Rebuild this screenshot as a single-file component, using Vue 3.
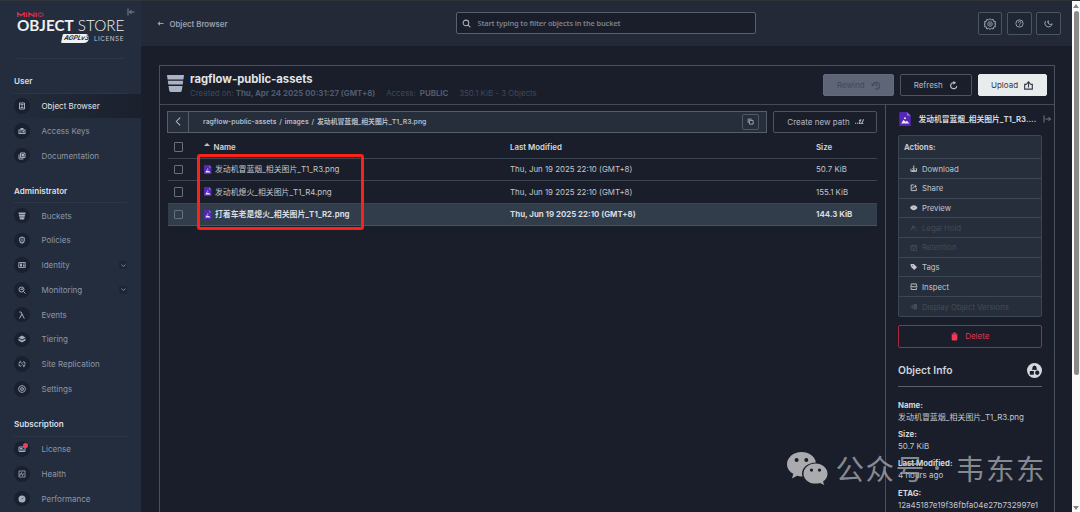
<template>
    <div class="app">
        <aside class="sidebar">
            <div class="brand">
                <svg class="collapse" viewBox="0 0 16 16" v-html="icons.collapse"></svg>
                <svg class="minio" viewBox="0 0 27 5">
                    <path d="M.7 5V.8L4 3.6 7.300.8V5M9.500.5V5M12 5V.9l5 3.500V.5M19.300.5V5" fill="none" stroke="#d7324c" stroke-width="1.300" />
                    <rect x="21.200" y="1" width="5" height="3.300" rx="1.600" fill="none" stroke="#d7324c" stroke-width="1" />
                </svg>
                <div class="product"><b>OBJECT</b> <span>STORE</span></div>
                <div class="license">
                    <span class="agpl">AGPL<i>v3</i></span>
                    <span class="license-text">LICENSE</span>
                </div>
            </div>

            <nav v-for="section in menu" :key="section.title" class="section">
                <h2 class="section-title">{{ section.title }}</h2>
                <ul class="menu">
                    <li v-for="item in section.items" :key="item.label" class="menu-item" :class="{ active: item.active }">
                        <span class="menu-icon">
                            <svg viewBox="0 0 16 16" v-html="icons[item.icon]"></svg>
                            <span v-if="item.badge" class="dot"></span>
                        </span>
                        <span class="menu-label">{{ item.label }}</span>
                        <span v-if="item.expandable" class="chevron">
                            <svg viewBox="0 0 16 16" v-html="icons.down"></svg>
                        </span>
                    </li>
                </ul>
            </nav>
        </aside>

        <main class="main">
            <header class="topbar">
                <div class="back">
                    <svg viewBox="0 0 16 16" v-html="icons.back"></svg>
                    <span>Object Browser</span>
                </div>
                <div class="search">
                    <svg viewBox="0 0 16 16" v-html="icons.search"></svg>
                    <span>Start typing to filter objects in the bucket</span>
                </div>
                <div class="tools">
                    <button v-for="tool in ['gear', 'help', 'moon']" :key="tool" class="tool">
                        <svg viewBox="0 0 16 16" :class="tool" v-html="icons[tool]"></svg>
                    </button>
                </div>
            </header>

            <section class="browser">
                <div class="bucket-head">
                    <svg class="bucket-icon" viewBox="0 0 17 17">
                        <path d="M.5 0h16a.5.5 0 0 1 .5.6L16.400 4.500H.6L0 .6A.5.5 0 0 1 .5 0zM.8 5.700h15.400L15.700 9.600H1.300zM1.500 10.900h14l-.7 4.700A1.500 1.500 0 0 1 13.300 17H3.700a1.500 1.500 0 0 1-1.500-1.400z" fill="#aab2c6" />
                    </svg>
                    <div class="bucket-info">
                        <h1>ragflow-public-assets</h1>
                        <p>
                            <span>Created on: <b>Thu, Apr 24 2025 00:31:27 (GMT+8)</b></span>
                            <span>Access: <b>&nbsp;PUBLIC</b></span>
                            <span>350.1 KiB - 3 Objects</span>
                        </p>
                    </div>
                    <div class="bucket-actions">
                        <button class="btn disabled">Rewind <svg viewBox="0 0 16 16" v-html="icons.rewind"></svg></button>
                        <button class="btn">Refresh <svg viewBox="0 0 16 16" v-html="icons.refresh"></svg></button>
                        <button class="btn primary">Upload <svg viewBox="0 0 16 16" v-html="icons.upload"></svg></button>
                    </div>
                </div>

                <div class="bucket-body">
                    <div class="listing">
                        <div class="path-row">
                            <div class="path">
                                <span class="path-back"><svg viewBox="0 0 16 16" v-html="icons.left"></svg></span>
                                <span class="crumbs">ragflow-public-assets&nbsp; /&nbsp; images&nbsp; /&nbsp; 发动机冒蓝烟_相关图片_T1_R3.png</span>
                                <span class="copy"><svg viewBox="0 0 16 16" v-html="icons.copy"></svg></span>
                            </div>
                            <button class="btn new-path">Create new path <svg viewBox="0 0 16 16" v-html="icons.path"></svg></button>
                        </div>

                        <div class="table">
                            <div class="row head">
                                <span class="check"></span>
                                <span class="name"><i class="sort"></i>Name</span>
                                <span>Last Modified</span>
                                <span>Size</span>
                            </div>
                            <div v-for="file in files" :key="file.name" class="row" :class="{ selected: file.selected }">
                                <span class="check"></span>
                                <span class="name">
                                    <svg class="file-icon" viewBox="0 0 12 15" v-html="icons.image"></svg>{{ file.name }}
                                </span>
                                <span>{{ file.modified }}</span>
                                <span>{{ file.size }}</span>
                            </div>
                            <div class="highlight"></div>
                        </div>
                    </div>

                    <aside class="details">
                        <div class="details-head">
                            <svg class="file-icon" viewBox="0 0 12 15" v-html="icons.image"></svg>
                            <b>发动机冒蓝烟_相关图片_T1_R3....</b>
                            <svg class="close" viewBox="0 0 16 16" v-html="icons.expand"></svg>
                        </div>
                        <ul class="actions">
                            <li class="actions-title">Actions:</li>
                            <li v-for="action in actions" :key="action.label" :class="{ off: action.off }">
                                <svg viewBox="0 0 16 16" v-html="icons[action.icon]"></svg>
                                {{ action.label }}
                            </li>
                        </ul>
                        <button class="btn delete"><svg viewBox="0 0 16 16" v-html="icons.trash"></svg> Delete</button>
                        <div class="info-head">
                            <h3>Object Info</h3>
                            <svg viewBox="0 0 16 16" v-html="icons.objectInfo"></svg>
                        </div>
                        <dl class="info">
                            <template v-for="row in info" :key="row.label">
                                <dt>{{ row.label }}:</dt>
                                <dd>{{ row.value }}</dd>
                            </template>
                        </dl>
                    </aside>
                </div>
            </section>
        </main>

        <div class="scrollbar">
            <i class="arrow up"></i>
            <div class="thumb"></div>
            <i class="arrow"></i>
        </div>

        <div class="watermark">
            <svg viewBox="0 0 41 33">
                <path fill-rule="evenodd" d="M14.500 0C22 0 28 4.600 28.900 10.400 21 10.400 15 15.500 15 21.500c0 1.100.2 2 .5 2.900-2 .1-3.700-.1-5.400-.6L5 26.400l1.300-4.600C2.500 19.700 0 16.200 0 12.200 0 5.500 6.500 0 14.500 0zM9.600 6a2 2 0 1 0 0 4 2 2 0 0 0 0-4zm9.700 0a2 2 0 1 0 0 4 2 2 0 0 0 0-4z" />
                <path fill-rule="evenodd" d="M28.500 11.500c6.700 0 12 4.500 12 10.200 0 3.200-1.700 6-4.500 7.800l1.200 3.500-4.200-2.100c-1.400.4-2.900.7-4.500.7-6.700 0-12-4.400-12-9.900s5.300-10.200 12-10.200zm-4 5a1.600 1.600 0 1 0 0 3.200 1.600 1.600 0 0 0 0-3.200zm8 0a1.600 1.600 0 1 0 0 3.200 1.600 1.600 0 0 0 0-3.200z" />
            </svg>
            <span>公众号</span><i></i><span>韦东东</span>
        </div>
    </div>
</template>

<script setup>
const line = (d, width = 1.5) =>
    `<path d="${d}" fill="none" stroke="currentColor" stroke-width="${width}"/>`;
const solid = (d) => `<path d="${d}" fill="currentColor" fill-rule="evenodd"/>`;

const icons = {
    collapse: line('M2 1v14M15 8H5M9 4L5 8l4 4', 1.8),
    expand: line('M2 1v14M5 8h10M11 4l4 4-4 4', 1.8),
    back: line('M15 8H3', 2.2) + solid('M1 8l6-5v10z'),
    search: line('M12 7A5 5 0 1 1 2 7a5 5 0 0 1 10 0zM10.5 10.500L15 15', 1.8),
    down: line('M2 5l6 6 6-6', 2.8),
    left: line('M11 1L4 8l7 7', 1.8),
    gear: line('M8 .8l1.800 1.900 2.500-.9.4 2.600 2.600.4-.9 2.500L16 8l-1.600 1.200.9 2.500-2.600.4-.4 2.600-2.500-.9L8 15.200l-1.800-1.400-2.500.9-.4-2.600-2.600-.4.9-2.500L0 8l1.600-.7-.9-2.500 2.600-.4.4-2.600 2.500.9z', 1.3) + line('M11 8A3 3 0 1 1 5 8a3 3 0 0 1 6 0z', 1.2) + solid('M7 7h2v2H7z'),
    help: line('M14.500 8a6.500 6.500 0 1 1-13 0 6.500 6.500 0 0 1 13 0zM5.800 6.500c0-3 4.800-3 4.800 0C10.600 8 8 8 8 10M8 11.300v1.400', 1.6),
    moon: line('M7.500 3a4.500 4.500 0 0 0 7 5.500A6.500 6.500 0 1 1 3 3.500M7.500 3v4', 1.7),
    rewind: line('M4 6a6 6 0 1 1 2 7.500M9.500 4v4l2.500 1.500', 2) + solid('M0 5h7L3.500 10z'),
    refresh: line('M10 3a5.500 5.500 0 1 0 3.800 6', 2.2) + solid('M7.500 0l5.500 3-5.500 3.500z'),
    upload: line('M5 6H1.200v8.500h13.600V6H11M8 11.500V2', 2) + solid('M8 0l4.500 5h-9z'),
    download: line('M2 8v5.500h12V7M8 1v9M5 7l3 3 3-3', 2) + solid('M4 11h8v3H4z'),
    copy: line('M5.500 5.500H14V14H5.500zM2.500 11V2.500H11', 1.8),
    path: line('M7 12l4-8M11.500 12l4-8', 1.8) + solid('M0 10h2v2H0zM3.500 10h2v2h-2zM7 5h2v2H7z') + line('M7 11.500h8', 1.4),
    object: line('M3 2h10v12H3z', 2) + line('M5 5h6M6 8h4M5 11h6', 1.8),
    key: solid('M1 5h4V2h6v3h4v9H1zM3 7v5h10V7zM4 9h3v2H4zM9 8h3v3H9z'),
    docs: line('M5 2h9v9H5zM2 5v9h9', 2) + solid('M7 4h5v5H7z'),
    bucket: solid('M1 1h14l-.5 4h-13zM2 6h12l-.5 3.500h-11zM3 10.500h10l-.7 4.500H3.700z'),
    policy: line('M8 2l4.500 2v5c0 3-2 4.500-4.500 5.500C5.500 13.500 3.500 12 3.500 9V4z', 2.2) + solid('M7 5h2v6H7z'),
    identity: line('M1.500 3h13v10h-13z', 1.7) + solid('M4 5h4v6H4zM10 5h3v2h-3zM10 8h3v3h-3z'),
    monitor: line('M12 7A5 5 0 1 1 2 7a5 5 0 0 1 10 0zM11 11l4 4M5 7h2l1-2 1 3', 2),
    lambda: line('M3 2h3l6.500 13M8 6l-5 9', 2),
    tier: solid('M8 1l7 4-7 4-7-4zM1 7l7 4 7-4v4l-7 4-7-4z'),
    replicate: line('M6 2a6 6 0 0 0-2 10M1.500 10L4 13l3-2M10 14a6 6 0 0 0 2-10M14.500 6L12 3 9 5M4 3l9 10', 1.6),
    settings: line('M8 1l5 2 2 5-2 5-5 2-5-2-2-5 2-5zM11 8A3 3 0 1 1 5 8a3 3 0 0 1 6 0z', 1.8) + solid('M7 7h2v2H7z'),
    license: line('M2 4h12v9H2zM4 7h5M4 10h8', 2),
    health: line('M2 2h12v12H2zM2 10h3l2-5 2 6 2-4', 1.6),
    performance: solid('M8 1a7 7 0 1 0 0 14A7 7 0 0 0 8 1zM8 9L7 8l5-4z'),
    share: line('M8 2H2.500v12h11V9M6 10c0-4 3-5 7-5M10 2l3.500 3L10 8', 2),
    eye: solid('M0 8c4-7 12-7 16 0-4 7-12 7-16 0zM8 7a1 1 0 1 0 0 2 1 1 0 0 0 0-2z'),
    hold: solid('M6 2l6 6-2 2-2-2-5 5-2-2 5-5-2-2zM9 12h6v2H9z'),
    retention: line('M2 3h12v11H2zM2 6h12M5 1v3M11 1v3', 1.8) + solid('M6 8h4v4H6z'),
    tag: solid('M1 2h7l7 7-6 6-7-7zM4 4v2h2V4z'),
    inspect: line('M2.500 6V2h11v4M2.500 10v4h11v-4M0 8h16', 2),
    versions: solid('M7 2h8v12H7zM4 4h2v8H4zM1 6h2v4H1z'),
    trash: solid('M3 3h3V1h4v2h3v2H3zM3 5.500h10V13a2 2 0 0 1-2 2H5a2 2 0 0 1-2-2z'),
    objectInfo: '<circle cx="8" cy="8" r="8" fill="#d5d8dd"/><path d="M3 8.500h4.300v4H3z" fill="#191e2a"/><path d="M8 2.300l3 5H5z" fill="#191e2a"/><circle cx="8" cy="5" r="2.200" fill="#191e2a"/><circle cx="10.900" cy="10.400" r="2.300" fill="#191e2a"/>',
    image: '<path d="M1 0h7l4 4v10a1 1 0 0 1-1 1H1a1 1 0 0 1-1-1V1a1 1 0 0 1 1-1z" fill="#5427b4"/><path d="M8 0l4 4H8z" fill="#8d6bd1"/><path d="M2 12l2.500-4 2 2 1.500-1 2.500 3z" fill="#eee9fa"/><circle cx="6" cy="6.500" r="1" fill="#eee9fa"/>'
};

const menu = [
    {
        title: 'User',
        items: [
            { label: 'Object Browser', icon: 'object', active: true },
            { label: 'Access Keys', icon: 'key' },
            { label: 'Documentation', icon: 'docs' }
        ]
    },
    {
        title: 'Administrator',
        items: [
            { label: 'Buckets', icon: 'bucket' },
            { label: 'Policies', icon: 'policy' },
            { label: 'Identity', icon: 'identity', expandable: true },
            { label: 'Monitoring', icon: 'monitor', expandable: true },
            { label: 'Events', icon: 'lambda' },
            { label: 'Tiering', icon: 'tier' },
            { label: 'Site Replication', icon: 'replicate' },
            { label: 'Settings', icon: 'settings' }
        ]
    },
    {
        title: 'Subscription',
        items: [
            { label: 'License', icon: 'license', badge: true },
            { label: 'Health', icon: 'health' },
            { label: 'Performance', icon: 'performance' }
        ]
    }
];

const files = [
    { name: '发动机冒蓝烟_相关图片_T1_R3.png', modified: 'Thu, Jun 19 2025 22:10 (GMT+8)', size: '50.7 KiB' },
    { name: '发动机熄火_相关图片_T1_R4.png', modified: 'Thu, Jun 19 2025 22:10 (GMT+8)', size: '155.1 KiB' },
    { name: '打着车老是熄火_相关图片_T1_R2.png', modified: 'Thu, Jun 19 2025 22:10 (GMT+8)', size: '144.3 KiB', selected: true }
];

const actions = [
    { label: 'Download', icon: 'download' },
    { label: 'Share', icon: 'share' },
    { label: 'Preview', icon: 'eye' },
    { label: 'Legal Hold', icon: 'hold', off: true },
    { label: 'Retention', icon: 'retention', off: true },
    { label: 'Tags', icon: 'tag' },
    { label: 'Inspect', icon: 'inspect' },
    { label: 'Display Object Versions', icon: 'versions', off: true }
];

const info = [
    { label: 'Name', value: '发动机冒蓝烟_相关图片_T1_R3.png' },
    { label: 'Size', value: '50.7 KiB' },
    { label: 'Last Modified', value: '4 hours ago' },
    { label: 'ETAG', value: '12a45187e19f36fbfa04e27b732997e1' }
];
</script>

<style>
body {
    margin: 0;
    overflow: hidden;
    background: #191e2a;
}
</style>

<style scoped>
* {
    box-sizing: border-box;
}

.app {
    position: relative;
    display: flex;
    height: 512px;
    overflow: hidden;
    border-top: 1px solid #303338;
    background: #191e2a;
    color: #c3c6cc;
    font-family: Inter, 'Noto Sans CJK SC', sans-serif;
    font-size: 8px;
    line-height: 12px;
    white-space: nowrap;
}

h1, h2, h3, p, ul, dl, dd {
    margin: 0;
    padding: 0;
    list-style: none;
}

svg {
    flex: none;
    display: block;
}

.sidebar {
    width: 141px;
    flex: none;
    background: #242d3d;
}

.brand {
    position: relative;
    height: 58px;
    margin: 0 17px;
    padding-top: 11px;
    border-bottom: 1px solid #2d3646;
}

.collapse {
    position: absolute;
    top: 7px;
    right: -11px;
    width: 8px;
    height: 8px;
    color: #8991a0;
}

.minio {
    width: 27px;
    height: 5px;
}

.product {
    margin-top: 1px;
    color: #eef0f3;
    font-family: Lato, sans-serif;
    font-size: 15.3px;
    line-height: 15px;
}

.product span {
    font-weight: 300;
}

.license {
    display: flex;
    justify-content: flex-end;
    align-items: center;
    height: 11px;
    gap: 5px;
}

.agpl {
    width: 27px;
    height: 8.5px;
    background: #f0f2f4;
    color: #242d3d;
    font-size: 6.5px;
    font-style: italic;
    font-weight: 700;
    line-height: 8px;
    padding-left: 2px;
    border-radius: 1px 5px 5px 1px;
    transform: skewX(-12deg);
}

.license-text {
    font-size: 6.3px;
    letter-spacing: 0.55px;
}

.section {
    padding-top: 13px;
}

.section + .section {
    padding-top: 13.6px;
}

.section-title {
    height: 21.7px;
    margin: 0 14px;
    padding-top: 3px;
    border-bottom: 1px solid #2d3646;
    color: #dcdfe4;
    font-size: 8.1px;
    font-weight: 600;
}

.menu-item {
    display: flex;
    align-items: center;
    height: 24.78px;
    padding: 0 14px;
    color: #8d97a8;
}

.menu-item.active {
    background: linear-gradient(90deg, #242d3d, #1a202c);
    color: #e2e5ea;
}

.menu-icon {
    position: relative;
    display: grid;
    place-items: center;
    width: 15.5px;
    height: 15.5px;
    margin-right: 12px;
    border-radius: 50%;
    background: #192130;
    color: #a6afbd;
}

.menu-icon svg {
    width: 8px;
    height: 8px;
}

.dot {
    position: absolute;
    top: 2px;
    right: 2px;
    width: 5px;
    height: 5px;
    border-radius: 50%;
    background: #f53b57;
}

.chevron {
    display: grid;
    place-items: center;
    width: 8px;
    height: 8px;
    margin-left: auto;
    background: #1d2635;
}

.chevron svg {
    width: 5px;
    height: 5px;
}

.main {
    flex: 1;
    min-width: 0;
}

.topbar {
    display: grid;
    grid-template-columns: 299px 300px 1fr;
    align-items: center;
    height: 45px;
    padding: 0 11px 0 16px;
    background: #232936;
}

.back {
    display: flex;
    align-items: center;
    gap: 5.5px;
    color: #98a1b1;
    font-size: 7.8px;
    font-weight: 600;
}

.back svg {
    width: 7px;
    height: 7px;
}

.search {
    display: flex;
    align-items: center;
    gap: 6.5px;
    height: 22px;
    margin-top: -1px;
    padding-left: 5px;
    border: 1px solid #59606e;
    border-radius: 2px;
    background: #191e2a;
    color: #7c818b;
    font-family: 'Noto Sans', sans-serif;
    font-size: 7.4px;
    font-weight: 600;
    letter-spacing: -0.13px;
    line-height: 18px;
}

.search svg {
    width: 9px;
    height: 9px;
    color: #a8afbc;
}

.tools {
    display: flex;
    justify-content: flex-end;
    gap: 4.5px;
}

.tool {
    display: grid;
    place-items: center;
    width: 25px;
    height: 23px;
    padding: 0;
    border: 1px solid #4c5462;
    border-radius: 2px;
    background: #1f2633;
    color: #a2a8b4;
}

.tool:first-child {
    width: 24px;
}

.tool svg {
    width: 9px;
    height: 9px;
}

.tool .gear {
    width: 12px;
    height: 12px;
}

.browser {
    display: flex;
    flex-direction: column;
    width: 896px;
    height: 470px;
    margin: 19px 0 0 18px;
    border: 1px solid #4a505d;
}

.bucket-head {
    display: flex;
    height: 39px;
    flex: none;
    padding: 0 7.5px 0 6.5px;
    border-bottom: 1px solid #434a58;
}

.bucket-icon {
    width: 17px;
    height: 17px;
    margin-top: 9px;
}

.bucket-info {
    margin-left: 6.5px;
    padding-top: 5px;
}

.bucket-info h1 {
    color: #e3e5e8;
    font-size: 11.25px;
    font-weight: 700;
    line-height: 16px;
}

.bucket-info p {
    display: flex;
    gap: 10.8px;
    color: #3f4959;
    font-size: 7.88px;
    line-height: 13px;
}

.bucket-info b {
    color: #505b6d;
}

.bucket-actions {
    display: flex;
    gap: 6px;
    margin: 8px 0 0 auto;
}

.btn {
    display: flex;
    align-items: center;
    justify-content: center;
    gap: 6px;
    width: 71.5px;
    height: 22px;
    padding: 0;
    border: 1px solid #4c5361;
    border-radius: 2px;
    background: transparent;
    color: #b3b8c2;
    font: inherit;
}

.btn svg {
    width: 9px;
    height: 9px;
}

.btn.disabled {
    border-color: #626a7c;
    background: #5d6577;
    color: #434a59;
}

.btn.primary {
    width: 69px;
    border-color: #e8ecec;
    background: #e8ecec;
    color: #343a45;
}

.bucket-body {
    display: flex;
    flex: 1;
    min-height: 0;
}

.listing {
    width: 724.5px;
    padding: 5.5px 7.5px 0 7px;
}

.path-row {
    display: flex;
    justify-content: space-between;
}

.path {
    display: flex;
    align-items: center;
    width: 600px;
    height: 22.5px;
    padding-right: 7px;
    border: 1px solid #565e6c;
    background: #262e3c;
    color: #b6bbc5;
    font-size: 6.85px;
    font-weight: 600;
}

.path-back {
    display: grid;
    place-items: center;
    width: 21px;
    height: 100%;
    border-right: 1px solid #565e6c;
}

.path-back svg {
    width: 9px;
    height: 9px;
}

.crumbs {
    margin-left: 14px;
    word-spacing: -0.3px;
}

.copy {
    display: grid;
    place-items: center;
    width: 17px;
    height: 16px;
    margin-left: auto;
    border: 1px solid #505866;
    border-radius: 2px;
}

.copy svg {
    width: 7px;
    height: 7px;
}

.btn.new-path {
    width: 104px;
    height: 22.5px;
    padding-left: 1px;
    gap: 5px;
}

.table {
    position: relative;
    margin-left: 1px;
    padding-top: 2px;
}

.row {
    display: grid;
    grid-template-columns: 36px 306px 306px 1fr;
    align-items: center;
    height: 22.5px;
    border-bottom: 1px solid #3d4452;
    font-size: 7.88px;
}

.row.head {
    height: 23.5px;
    padding-top: 1px;
    color: #d6d9de;
    font-weight: 600;
}

.row.selected {
    border-bottom-color: #465362;
    background: #323d4b;
    color: #d9dce1;
    font-weight: 700;
}

.check {
    width: 9.5px;
    height: 9.5px;
    margin-left: 5.5px;
    border: 1px solid #69707d;
    border-radius: 1px;
}

.name {
    display: flex;
    align-items: center;
}

.name .file-icon {
    width: 7.5px;
    height: 9.4px;
    margin-right: 3.5px;
}

.sort {
    margin: -4px 3.5px 0 0;
    border: 3px solid transparent;
    border-top: 0;
    border-bottom-color: #c0c4ca;
}

.highlight {
    position: absolute;
    top: 20.5px;
    left: 28.5px;
    width: 167px;
    height: 76px;
    border: 3px solid #fb2218;
    border-radius: 3px;
}

.details {
    width: 169.5px;
    padding: 0 12.5px;
    border-left: 1px solid #4a505d;
}

.details-head {
    display: flex;
    align-items: center;
    height: 29.5px;
    padding-bottom: 2px;
    color: #d2d5db;
    font-size: 7.75px;
}

.details-head .file-icon {
    width: 12px;
    height: 14.5px;
    margin-left: 1px;
}

.details-head b {
    margin-left: 7.5px;
}

.details-head .close {
    width: 8px;
    height: 8px;
    margin: 0 -9.5px 0 auto;
    color: #7c8492;
}

.actions {
    height: 182px;
    border: 1px solid #3c4654;
    border-radius: 2px;
    background: #262e3c;
}

.actions li {
    display: flex;
    align-items: center;
    gap: 4.5px;
    height: 19.7px;
    padding-left: 11px;
    border-bottom: 1px solid #3c4654;
    font-size: 7.75px;
}

.actions li:last-child {
    border-bottom: 0;
}

.actions .actions-title {
    height: 23.7px;
    padding-left: 5px;
    font-weight: 700;
}

.actions svg {
    width: 7.5px;
    height: 7.5px;
}

.actions .off {
    color: #444b55;
}

.btn.delete {
    width: 100%;
    margin-top: 8px;
    height: 23px;
    border-color: #a6293f;
    color: #dd3652;
}

.btn.delete svg {
    color: #fa3654;
}

.info-head {
    display: flex;
    align-items: center;
    justify-content: space-between;
    height: 39px;
    padding-top: 7px;
    border-bottom: 1px solid #5a606d;
}

.info-head h3 {
    color: #d0d3d9;
    font-size: 10.3px;
    font-weight: 600;
}

.info-head svg {
    width: 15px;
    height: 15px;
}

.info {
    padding-top: 12.5px;
    font-size: 7.98px;
}

.info dt {
    color: #d3d6db;
    font-size: 7.8px;
    font-weight: 700;
}

.info dd {
    margin-bottom: 5.2px;
}

.scrollbar {
    display: flex;
    flex-direction: column;
    align-items: center;
    width: 8px;
    flex: none;
    padding: 3px 0 2px;
    background: #fafafa;
}

.thumb {
    width: 5px;
    height: 364px;
    margin: 3px 0 auto;
    border-radius: 3px;
    background: #8b8b8b;
}

.arrow {
    border: 3px solid transparent;
    border-top: 4px solid #858585;
    border-bottom: 0;
}

.arrow.up {
    border-top: 0;
    border-bottom: 4px solid #858585;
}

.watermark {
    position: absolute;
    top: 450.5px;
    left: 787px;
    display: flex;
    align-items: center;
    height: 33px;
    color: rgba(178, 180, 184, 0.72);
    font-family: 'Noto Sans CJK SC', sans-serif;
    font-size: 28.5px;
    letter-spacing: 1.6px;
    line-height: 33px;
}

.watermark span {
    padding-bottom: 2px;
}

.watermark svg {
    width: 41px;
    height: 33px;
    margin-right: 7.5px;
    fill: #a9abae;
}

.watermark i {
    width: 4.5px;
    height: 4.5px;
    margin: 0 16.5px 0 9px;
    border-radius: 50%;
    background: currentColor;
}
</style>
